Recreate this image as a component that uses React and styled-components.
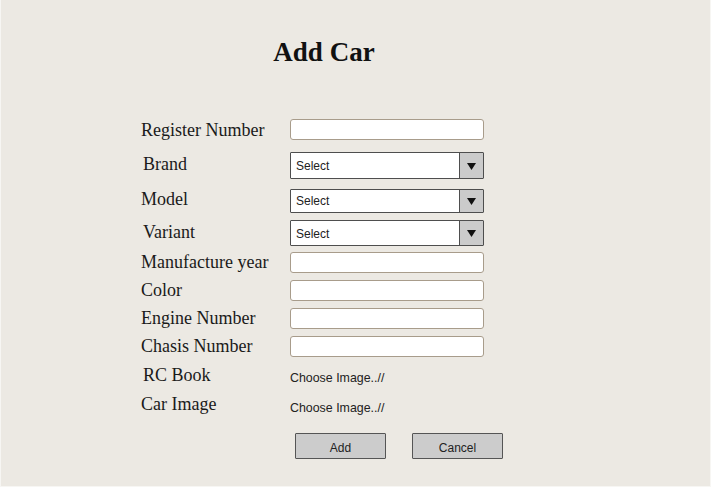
import React from "react";
import styled, { createGlobalStyle } from "styled-components";

const Global = createGlobalStyle`
  html, body { margin: 0; padding: 0; }
  body { background: #ece9e3; }
`;

const Page = styled.div`
  box-sizing: border-box;
  width: 711px;
  height: 487px;
  background: #ece9e3;
  border-left: 1px solid #f7f6f3;
  border-right: 1px solid #f7f6f3;
  border-bottom: 1px solid #f7f6f3;
  overflow: hidden;
`;

const Panel = styled.div`
  margin-left: 138px;
  width: 370px;
  padding-top: 37px;
  display: flex;
  flex-direction: column;
`;

const Title = styled.h1`
  margin: 0 0 50px 0;
  font-family: "Liberation Serif", "Times New Roman", serif;
  font-weight: bold;
  font-size: 27px;
  line-height: 30px;
  text-align: center;
  color: #111;
`;

const Row = styled.div`
  display: flex;
  align-items: center;
  height: ${(p) => p.$h || 25}px;
  margin-top: ${(p) => p.$mt || 0}px;
`;

const Label = styled.div`
  width: 151px;
  flex: none;
  box-sizing: border-box;
  padding-left: ${(p) => p.$dx || 0}px;
  margin-top: ${(p) => p.$dy || 0}px;
  font-family: "Liberation Serif", "Times New Roman", serif;
  font-size: 18px;
  line-height: 20px;
  color: #1a1a1a;
  white-space: nowrap;
`;

const TextInput = styled.div`
  box-sizing: border-box;
  width: 194px;
  height: 21px;
  background: #fff;
  border: 1.5px solid #a89c8b;
  border-radius: 3px;
`;

const SelectBox = styled.div`
  box-sizing: border-box;
  width: 194px;
  height: ${(p) => p.$h || 25}px;
  display: flex;
  background: #fff;
  border: 1.5px solid #4e4e4e;
  border-radius: 1px;
`;

const SelectText = styled.div`
  flex: 1;
  display: flex;
  align-items: center;
  padding-left: 5px;
  padding-top: 1px;
  font-family: "Liberation Sans", Arial, sans-serif;
  font-size: 12px;
  color: #222;
`;

const Arrow = styled.div`
  width: 23px;
  display: flex;
  align-items: center;
  justify-content: center;
  background: #cbcbcb;
  border-left: 1.5px solid #4e4e4e;
`;

const Chooser = styled.div`
  padding-top: 6px;
  font-family: "Liberation Sans", Arial, sans-serif;
  font-size: 12.4px;
  color: #222;
`;

const Buttons = styled.div`
  display: flex;
  gap: 26px;
  margin-top: 16px;
  padding-left: 156px;
`;

const Button = styled.button`
  box-sizing: border-box;
  width: 91px;
  height: 26px;
  padding: 4px 0 0 0;
  background: #cccccc;
  border: 1.5px solid #555;
  border-radius: 1px;
  font-family: "Liberation Sans", Arial, sans-serif;
  font-size: 12px;
  color: #222;
`;

function Select({ h }) {
  return (
    <SelectBox $h={h}>
      <SelectText>Select</SelectText>
      <Arrow>
        <svg width="9" height="8" viewBox="0 0 9 8">
          <polygon points="0,1 9,1 4.5,8" fill="#111" />
        </svg>
      </Arrow>
    </SelectBox>
  );
}

export default function App() {
  return (
    <>
      <Global />
      <Page>
        <Panel>
          <Title>Add Car</Title>
          <Row $h={25}>
            <Label $dx={2}>Register Number</Label>
            <TextInput />
          </Row>
          <Row $h={27} $mt={10}>
            <Label $dx={4} $dy={-3}>Brand</Label>
            <Select h={27} />
          </Row>
          <Row $h={25} $mt={9}>
            <Label $dx={2} $dy={-3}>Model</Label>
            <Select h={24} />
          </Row>
          <Row $h={26} $mt={7}>
            <Label $dx={4} $dy={-3}>Variant</Label>
            <Select h={26} />
          </Row>
          <Row $h={24} $mt={4}>
            <Label $dx={2}>Manufacture year</Label>
            <TextInput />
          </Row>
          <Row $h={24} $mt={4}>
            <Label $dx={2}>Color</Label>
            <TextInput />
          </Row>
          <Row $h={24} $mt={4}>
            <Label $dx={2}>Engine Number</Label>
            <TextInput />
          </Row>
          <Row $h={24} $mt={4}>
            <Label $dx={2}>Chasis Number</Label>
            <TextInput />
          </Row>
          <Row $h={24} $mt={5}>
            <Label $dx={4} $dy={-1}>RC Book</Label>
            <Chooser>Choose Image..//</Chooser>
          </Row>
          <Row $h={24} $mt={6}>
            <Label $dx={2} $dy={-2}>Car Image</Label>
            <Chooser>Choose Image..//</Chooser>
          </Row>
          <Buttons>
            <Button>Add</Button>
            <Button>Cancel</Button>
          </Buttons>
        </Panel>
      </Page>
    </>
  );
}
